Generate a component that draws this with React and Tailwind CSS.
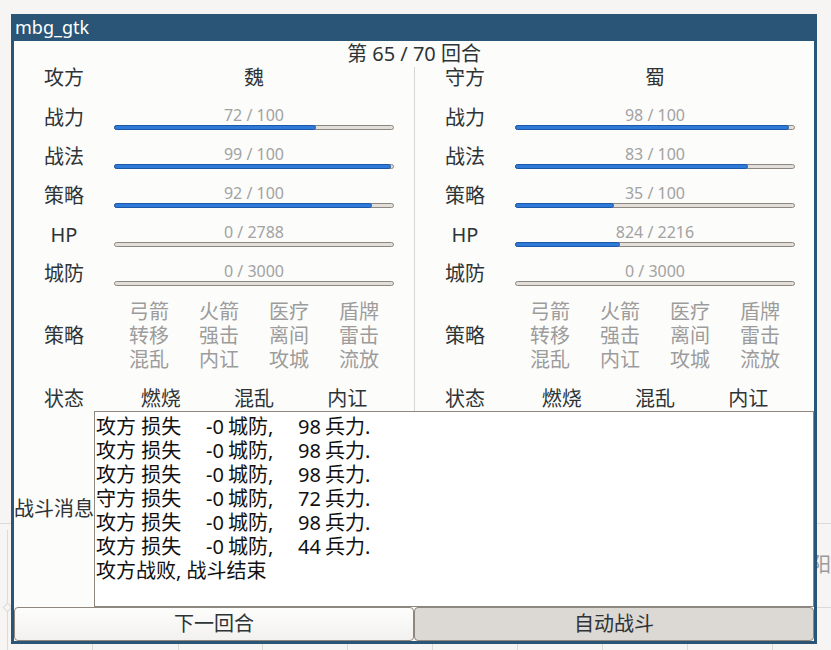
import React from "react";

const FONT = { fontFamily: '"Noto Sans", "Noto Sans CJK SC", sans-serif' };

const attacker = {
  role: "攻方",
  name: "魏",
  stats: [
    { label: "战力", cur: 72, max: 100 },
    { label: "战法", cur: 99, max: 100 },
    { label: "策略", cur: 92, max: 100 },
    { label: "HP", cur: 0, max: 2788 },
    { label: "城防", cur: 0, max: 3000 },
  ],
};

const defender = {
  role: "守方",
  name: "蜀",
  stats: [
    { label: "战力", cur: 98, max: 100 },
    { label: "战法", cur: 83, max: 100 },
    { label: "策略", cur: 35, max: 100 },
    { label: "HP", cur: 824, max: 2216 },
    { label: "城防", cur: 0, max: 3000 },
  ],
};

const tactics = ["弓箭", "火箭", "医疗", "盾牌", "转移", "强击", "离间", "雷击", "混乱", "内讧", "攻城", "流放"];
const states = ["燃烧", "混乱", "内讧"];

const log = [
  ["攻方", "-0", "98"],
  ["攻方", "-0", "98"],
  ["攻方", "-0", "98"],
  ["守方", "-0", "72"],
  ["攻方", "-0", "98"],
  ["攻方", "-0", "44"],
];

function Bar({ cur, max }) {
  const pct = max ? cur / max : 0;
  return (
    <div className="relative h-[5px] rounded-full border border-[#8e8780] bg-[#e2ded9]">
      {pct > 0 && (
        <div
          className="absolute left-[-1px] top-[-1px] bottom-[-1px] rounded-full border border-[#1c58a8] bg-[#2f7ad8]"
          style={{ width: `calc(${pct * 100}% + 2px)` }}
        />
      )}
    </div>
  );
}

function Side({ data, wide }) {
  return (
    <div className={`flex flex-col ${wide ? "w-[400px]" : "w-[399px]"}`}>
      <div className="flex h-[31px]">
        <div className="w-[100px] text-center leading-[22px]">{data.role}</div>
        <div className="w-[280px] text-center leading-[22px]">{data.name}</div>
      </div>
      {data.stats.map((s) => (
        <div key={s.label} className="flex h-[39px] items-center">
          <div className="w-[100px] text-center leading-[26px]">{s.label}</div>
          <div className="flex w-[280px] flex-col">
            <div className="text-center text-[16px] leading-[20px] text-[#a2a2a2]">
              {s.cur} / {s.max}
            </div>
            <Bar cur={s.cur} max={s.max} />
          </div>
        </div>
      ))}
      <div className="flex h-[86px] items-center">
        <div className="w-[100px] text-center leading-[24px]">策略</div>
        <div className="grid w-[280px] grid-cols-4 text-center leading-[24px] text-[#9c9c9c]">
          {tactics.map((t, i) => (
            <span key={i}>{t}</span>
          ))}
        </div>
      </div>
      <div className="flex h-[32px] items-end">
        <div className="w-[100px] text-center leading-[24px]">状态</div>
        <div className="grid w-[280px] grid-cols-3 text-center leading-[24px]">
          {states.map((t) => (
            <span key={t}>{t}</span>
          ))}
        </div>
      </div>
    </div>
  );
}

function Backdrop() {
  const cols = [92, 178, 262, 347, 432, 517, 602, 687, 772];
  return (
    <div className="absolute inset-0">
      <div className="absolute left-0 top-[523px] h-px w-[11px] bg-[#dcdad6]" />
      <div className="absolute left-[7px] top-[530px] h-[120px] w-px bg-[#dcdad6]" />
      <div className="absolute left-[4px] top-[604px] h-[7px] w-[7px] rotate-45 border border-[#dcdad6] bg-[#f6f5f4]" />
      <div className="absolute left-[817px] top-[523px] h-px w-[14px] bg-[#dcdad6]" />
      <div className="absolute left-[817px] top-[607px] h-px w-[14px] bg-[#dcdad6]" />
      <div className="absolute left-[811px] top-[552px] text-[20px] leading-[26px] text-[#9a9a9a]">阳</div>
      {cols.map((x) => (
        <div key={x} className="absolute top-[644px] h-[6px] w-px bg-[#dcdad6]" style={{ left: x }} />
      ))}
    </div>
  );
}

export default function App() {
  return (
    <div className="relative h-[650px] w-[831px] overflow-hidden bg-[#f6f5f4] pl-[11px] pt-[14px]" style={FONT}>
      <Backdrop />
      <div className="relative flex w-[806px] flex-col">
        <div className="h-[27px] bg-[#2a5576] pl-[4px] text-[18px] leading-[26px] text-white">mbg_gtk</div>
        <div className="flex h-[603px] flex-col border-x-[3px] border-b-[3px] border-[#2a5576] bg-[#fcfcfb] text-[20px] text-[#2e3436]">
          <div className="h-[26px] text-center leading-[26px]">第 65 / 70 回合</div>
          <div className="flex h-[344px]">
            <Side data={attacker} wide />
            <div className="w-px bg-[#dad8d4]" />
            <Side data={defender} />
          </div>
          <div className="flex h-[196px]">
            <div className="flex w-[80px] items-center justify-center leading-[26px]">战斗消息</div>
            <div className="flex-1 border border-[#8e8780] bg-white pl-px pt-[3px] leading-[24px] text-[#111]">
              {log.map(([who, wall, men], i) => (
                <div key={i} className="flex h-[24px]">
                  <span className="w-[90px] whitespace-pre">{who} 损失</span>
                  <span className="w-[38px] text-right">{wall}</span>
                  <span className="w-[52px] pl-[4px]">城防,</span>
                  <span className="w-[45px] text-right">{men}</span>
                  <span className="pl-[4px]">兵力.</span>
                </div>
              ))}
              <div>攻方战败, 战斗结束</div>
            </div>
          </div>
          <div className="flex h-[34px]">
            <button className="w-[400px] rounded-[4px] border border-[#8e8780] bg-gradient-to-b from-[#fdfdfc] to-[#f2f1ef] leading-[26px] text-[#2e3436]">
              下一回合
            </button>
            <button className="flex-1 rounded-[4px] border border-[#8e8780] bg-[#dcd8d4] leading-[26px] text-[#2e3436]">
              自动战斗
            </button>
          </div>
        </div>
      </div>
    </div>
  );
}
